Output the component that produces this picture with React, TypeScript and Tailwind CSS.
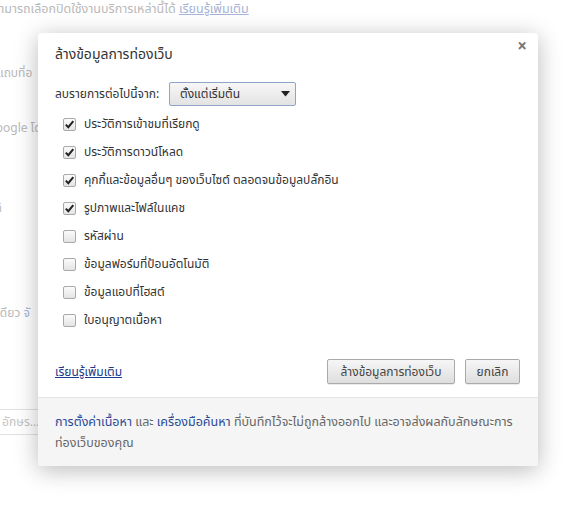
import React from 'react';

const THAI = "font-['Tahoma','Noto_Sans_Thai','Noto_Sans','Liberation_Sans',sans-serif]";

const items = [
  { label: 'ประวัติการเข้าชมที่เรียกดู', checked: true },
  { label: 'ประวัติการดาวน์โหลด', checked: true },
  { label: 'คุกกี้และข้อมูลอื่นๆ ของเว็บไซต์ ตลอดจนข้อมูลปลั๊กอิน', checked: true },
  { label: 'รูปภาพและไฟล์ในแคช', checked: true },
  { label: 'รหัสผ่าน', checked: false },
  { label: 'ข้อมูลฟอร์มที่ป้อนอัตโนมัติ', checked: false },
  { label: 'ข้อมูลแอปที่โฮสต์', checked: false },
  { label: 'ใบอนุญาตเนื้อหา', checked: false },
];

const Checkbox: React.FC<{ checked: boolean }> = ({ checked }) => (
  <span className="w-[13px] h-[13px] shrink-0 rounded-[2px] border border-[#a9a9a9] bg-gradient-to-b from-[#fbfbfb] to-[#e4e4e4] flex items-center justify-center">
    {checked && (
      <svg width="11" height="11" viewBox="0 0 11 11">
        <path d="M1.8 5.6 L4.3 8.2 L9.3 2.2" fill="none" stroke="#222" strokeWidth="2" />
      </svg>
    )}
  </span>
);

const Button: React.FC<{ children: React.ReactNode; className?: string }> = ({ children, className }) => (
  <button
    className={`h-[25px] rounded-[2px] border border-[#aaa] bg-gradient-to-b from-[#f6f6f6] to-[#dedede] text-[12px] text-[#444] shadow-[0_1px_0_rgba(0,0,0,0.08)] ${className ?? ''}`}
  >
    {children}
  </button>
);

export default function App() {
  return (
    <div className={`relative w-[575px] h-[511px] overflow-hidden bg-white ${THAI}`}>
      {/* faded page behind the dialog */}
      <div className="text-[12px] text-[#b9b9b9] leading-[18px]">
        <div className="pt-[1px] -ml-[8px] whitespace-nowrap text-[12.5px]">
          สามารถเลือกปิดใช้งานบริการเหล่านี้ได้ <span className="text-[#a6b3d6] underline">เรียนรู้เพิ่มเติม</span>
        </div>
        <div className="mt-[45px] -ml-[3px] whitespace-nowrap">แถบที่อ</div>
        <div className="mt-[37px] -ml-[13px] whitespace-nowrap">Google โด</div>
        <div className="mt-[62px] -ml-[20px] whitespace-nowrap">หมดิ</div>
        <div className="mt-[87px] -ml-[10px] whitespace-nowrap">
          งเดียว <span className="text-[#a6b3d6]">จั</span>
        </div>
        <div className="mt-[87px] w-[60px] h-[26px] border border-[#e2e2e2] -ml-[2px] flex items-center text-[12px] text-[#c4c4c4] whitespace-nowrap overflow-hidden">
          &nbsp;อักษร...
        </div>
      </div>

      {/* dialog */}
      <div className="absolute left-[38px] top-[33px] w-[500px] rounded-[3px] bg-white shadow-[0_4px_23px_rgba(0,0,0,0.28)] overflow-hidden">
        <div className="relative px-[17px] pt-[10px]">
          <button className="absolute right-[11px] top-[6px] text-[#777] text-[17px] font-bold leading-none">×</button>
          <h1 className="text-[14px] text-[#333] leading-[24px]">ล้างข้อมูลการท่องเว็บ</h1>

          <div className="mt-[15px] flex items-center text-[12px] text-[#333]">
            <span className="w-[114px]">ลบรายการต่อไปนี้จาก:</span>
            <div className="w-[127px] h-[24px] rounded-[2px] border border-[#8fa5c8] bg-gradient-to-b from-[#f7f7f7] to-[#e3e3e3] flex items-center justify-between pl-[10px] pr-[5px] text-[#333]">
              <span>ตั้งแต่เริ่มต้น</span>
              <svg width="9" height="6" viewBox="0 0 9 6">
                <path d="M0 0 H9 L4.5 5.5 Z" fill="#222" />
              </svg>
            </div>
          </div>

          <div className="mt-[4px] pl-[8px] flex flex-col">
            {items.map((it) => (
              <label key={it.label} className="h-[28px] flex items-center gap-[8px] text-[12px] text-[#333] whitespace-nowrap">
                <Checkbox checked={it.checked} />
                <span>{it.label}</span>
              </label>
            ))}
          </div>

          <div className="mt-[25px] pb-[13px] flex items-center">
            <a className="text-[12px] text-[#1a3a8a] underline flex-1">เรียนรู้เพิ่มเติม</a>
            <Button className="w-[128px]">ล้างข้อมูลการท่องเว็บ</Button>
            <Button className="w-[55px] ml-[10px] mr-[1px]">ยกเลิก</Button>
          </div>
        </div>

        <div className="border-t border-[#e4e4e4] bg-[#f5f5f5] px-[17px] pt-[14px] pb-[12px] text-[12.5px] leading-[21px] text-[#666]">
          <span className="whitespace-nowrap">
            <a className="text-[#2a4a96]">การตั้งค่าเนื้อหา</a> และ <a className="text-[#2a4a96]">เครื่องมือค้นหา</a> ที่บันทึกไว้จะไม่ถูกล้างออกไป และอาจส่งผลกับลักษณะการ
          </span>
          <br />
          ท่องเว็บของคุณ
        </div>
      </div>
    </div>
  );
}
